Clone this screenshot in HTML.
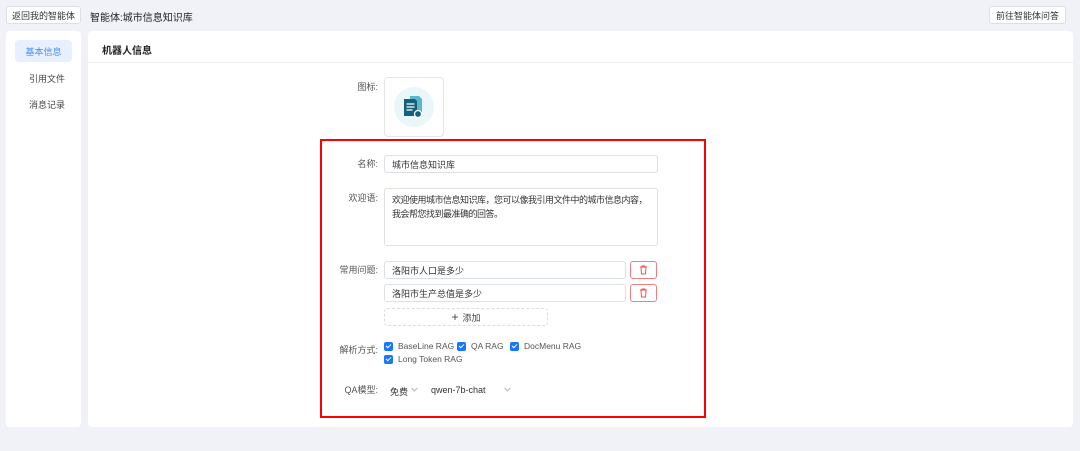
<!DOCTYPE html>
<html><head><meta charset="utf-8"><style>
*{box-sizing:border-box;margin:0;padding:0}
body{width:1080px;height:451px;background:#f0f2f8;font-family:"Liberation Sans","Noto Sans CJK SC",sans-serif;font-size:9px;color:#333;position:relative;overflow:hidden}
.abs{position:absolute}
.btn{position:absolute;background:#fff;border:1px solid #dcdfe6;border-radius:3px;font-size:9px;display:flex;align-items:center;justify-content:center;color:#333}
.inp{position:absolute;background:#fff;border:1px solid #dcdfe6;border-radius:3px;padding:0 7px;display:flex;align-items:center;font-size:9px;color:#333}
.lbl{position:absolute;font-size:9px;color:#555;text-align:right;width:80px;line-height:10px}
.del{position:absolute;border:1px solid #f08080;border-radius:3px;background:#fff;width:27px;height:18px}
.cb{position:absolute;left:0;top:1px;width:9px;height:9px;background:#1677ff;border-radius:2px}
.cb:after{content:"";position:absolute;left:3px;top:1px;width:2px;height:4px;border:solid #fff;border-width:0 1.3px 1.3px 0;transform:rotate(45deg)}
.ck{position:absolute;color:#555;white-space:nowrap;font-size:8.5px;padding-left:14px;line-height:11px}
</style></head><body>
<div class="btn" style="left:6px;top:6px;width:75px;height:18px">返回我的智能体</div>
<div class="abs" style="left:90px;top:9px;font-size:10px;color:#222">智能体:城市信息知识库</div>
<div class="btn" style="left:989px;top:6px;width:77px;height:18px">前往智能体问答</div>
<div class="abs" style="left:6px;top:31px;width:75px;height:396px;background:#fff;border-radius:4px"></div>
<div class="abs" style="left:15px;top:40px;width:57px;height:22px;background:#e6f0ff;border-radius:4px;color:#4a8cf7;font-size:9px;display:flex;align-items:center;justify-content:center">基本信息</div>
<div class="abs" style="left:29px;top:72px;color:#444">引用文件</div>
<div class="abs" style="left:29px;top:98px;color:#444">消息记录</div>
<div class="abs" style="left:88px;top:31px;width:985px;height:396px;background:#fff;border-radius:4px"></div>
<div class="abs" style="left:88px;top:62px;width:985px;height:1px;background:#f0f0f0"></div>
<div class="abs" style="left:102px;top:42px;font-size:10px;font-weight:bold;color:#222">机器人信息</div>
<div class="lbl" style="left:298px;top:82px">图标:</div>
<div class="abs" style="left:384px;top:77px;width:60px;height:60px;border:1px solid #e5e5e5;border-radius:4px;background:#fff"></div>
<div class="abs" style="left:394px;top:87px;width:40px;height:40px;border-radius:50%;background:#e9f7fb"></div>
<svg class="abs" style="left:400px;top:93px" width="28" height="28" viewBox="0 0 28 28"><path d="M10 3h9l3 3v13H10z" fill="#5bb7c9"/><path d="M4 6h11l2 2v15H4z" fill="#16607a"/><path d="M6.5 11h8M6.5 14h8M6.5 17h6" stroke="#fff" stroke-width="1.2"/><circle cx="18" cy="21" r="3.5" fill="#16607a" stroke="#fff" stroke-width="1.2"/></svg>
<div class="abs" style="left:320px;top:139px;width:386px;height:279px;border:2px solid #f00"></div>
<div class="lbl" style="left:298px;top:159px">名称:</div>
<div class="inp" style="left:384px;top:155px;width:274px;height:18px">城市信息知识库</div>
<div class="lbl" style="left:298px;top:193px">欢迎语:</div>
<div class="inp" style="left:384px;top:188px;width:274px;height:58px;align-items:flex-start;padding:4px 4px 0 7px;line-height:14px;letter-spacing:-0.5px">欢迎使用城市信息知识库，您可以像我引用文件中的城市信息内容，我会帮您找到最准确的回答。</div>
<div class="lbl" style="left:298px;top:265px">常用问题:</div>
<div class="inp" style="left:384px;top:261px;width:242px;height:18px">洛阳市人口是多少</div>
<div class="del" style="left:630px;top:261px"></div>
<div class="inp" style="left:384px;top:284px;width:242px;height:18px">洛阳市生产总值是多少</div>
<div class="del" style="left:630px;top:284px"></div>
<svg class="abs" style="left:639px;top:265px" width="9" height="10" viewBox="0 0 9 10"><path d="M1 2h7M3 2V1h3v1M2 2l.5 7h4L7 2" stroke="#e55" fill="none" stroke-width="1"/></svg>
<svg class="abs" style="left:639px;top:288px" width="9" height="10" viewBox="0 0 9 10"><path d="M1 2h7M3 2V1h3v1M2 2l.5 7h4L7 2" stroke="#e55" fill="none" stroke-width="1"/></svg>
<div class="abs" style="left:384px;top:308px;width:164px;height:18px;border:1px dashed #ddd;border-radius:3px;display:flex;align-items:center;justify-content:center;color:#444"><span style="font-size:12px;margin-right:4px">+</span>添加</div>
<div class="lbl" style="left:298px;top:345px">解析方式:</div>
<div class="ck" style="left:384px;top:341px"><span class="cb"></span>BaseLine RAG</div>
<div class="ck" style="left:457px;top:341px"><span class="cb"></span>QA RAG</div>
<div class="ck" style="left:510px;top:341px"><span class="cb"></span>DocMenu RAG</div>
<div class="ck" style="left:384px;top:354px"><span class="cb"></span>Long Token RAG</div>
<div class="lbl" style="left:298px;top:385px">QA模型:</div>
<div class="abs" style="left:390px;top:385px;color:#333">免费</div>
<svg class="abs" style="left:411px;top:387px" width="7" height="5" viewBox="0 0 7 5"><path d="M.5 1l3 3 3-3" stroke="#bbb" fill="none"/></svg>
<div class="abs" style="left:431px;top:385px;color:#333">qwen-7b-chat</div>
<svg class="abs" style="left:504px;top:387px" width="7" height="5" viewBox="0 0 7 5"><path d="M.5 1l3 3 3-3" stroke="#bbb" fill="none"/></svg>
</body></html>
